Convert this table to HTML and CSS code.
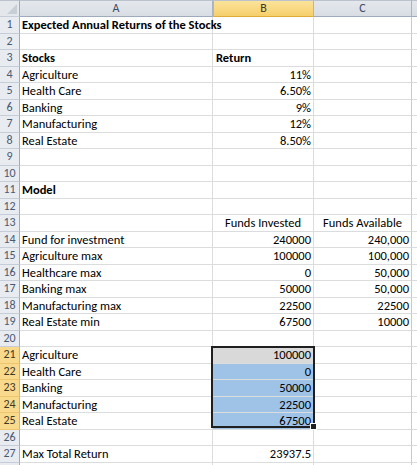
FILE: index.html
```html
<!DOCTYPE html>
<html>
<head>
<meta charset="utf-8">
<link rel="stylesheet" href="styles.css">
</head>
<body>
<div class="sheet">
  <div class="row head">
    <div class="c rh corner"><span class="tri"></span></div>
    <div class="c ch">A</div>
    <div class="c ch sel">B</div>
    <div class="c ch">C</div>
    <div class="c ch end"></div>
  </div>
  <div class="row"><div class="c rh">1</div><div class="c a b">Expected Annual Returns of the Stocks</div><div class="c bb"></div><div class="c cc"></div><div class="c d"></div></div>
  <div class="row"><div class="c rh">2</div><div class="c a"></div><div class="c bb"></div><div class="c cc"></div><div class="c d"></div></div>
  <div class="row"><div class="c rh">3</div><div class="c a b">Stocks</div><div class="c bb b">Return</div><div class="c cc"></div><div class="c d"></div></div>
  <div class="row"><div class="c rh">4</div><div class="c a">Agriculture</div><div class="c bb n">11%</div><div class="c cc"></div><div class="c d"></div></div>
  <div class="row"><div class="c rh">5</div><div class="c a">Health Care</div><div class="c bb n">6.50%</div><div class="c cc"></div><div class="c d"></div></div>
  <div class="row"><div class="c rh">6</div><div class="c a">Banking</div><div class="c bb n">9%</div><div class="c cc"></div><div class="c d"></div></div>
  <div class="row"><div class="c rh">7</div><div class="c a">Manufacturing</div><div class="c bb n">12%</div><div class="c cc"></div><div class="c d"></div></div>
  <div class="row"><div class="c rh">8</div><div class="c a">Real Estate</div><div class="c bb n">8.50%</div><div class="c cc"></div><div class="c d"></div></div>
  <div class="row"><div class="c rh">9</div><div class="c a"></div><div class="c bb"></div><div class="c cc"></div><div class="c d"></div></div>
  <div class="row"><div class="c rh">10</div><div class="c a"></div><div class="c bb"></div><div class="c cc"></div><div class="c d"></div></div>
  <div class="row"><div class="c rh">11</div><div class="c a b">Model</div><div class="c bb"></div><div class="c cc"></div><div class="c d"></div></div>
  <div class="row"><div class="c rh">12</div><div class="c a"></div><div class="c bb"></div><div class="c cc"></div><div class="c d"></div></div>
  <div class="row"><div class="c rh">13</div><div class="c a"></div><div class="c bb ctr">Funds Invested</div><div class="c cc ctr">Funds Available</div><div class="c d"></div></div>
  <div class="row"><div class="c rh">14</div><div class="c a">Fund for investment</div><div class="c bb n">240000</div><div class="c cc n">240,000</div><div class="c d"></div></div>
  <div class="row"><div class="c rh">15</div><div class="c a">Agriculture max</div><div class="c bb n">100000</div><div class="c cc n">100,000</div><div class="c d"></div></div>
  <div class="row"><div class="c rh">16</div><div class="c a">Healthcare max</div><div class="c bb n">0</div><div class="c cc n">50,000</div><div class="c d"></div></div>
  <div class="row"><div class="c rh">17</div><div class="c a">Banking max</div><div class="c bb n">50000</div><div class="c cc n">50,000</div><div class="c d"></div></div>
  <div class="row"><div class="c rh">18</div><div class="c a">Manufacturing max</div><div class="c bb n">22500</div><div class="c cc n">22500</div><div class="c d"></div></div>
  <div class="row"><div class="c rh">19</div><div class="c a">Real Estate min</div><div class="c bb n">67500</div><div class="c cc n">10000</div><div class="c d"></div></div>
  <div class="row"><div class="c rh">20</div><div class="c a"></div><div class="c bb"></div><div class="c cc"></div><div class="c d"></div></div>
  <div class="row"><div class="c rh hl">21</div><div class="c a">Agriculture</div><div class="c bb n active">100000</div><div class="c cc"></div><div class="c d"></div></div>
  <div class="row"><div class="c rh hl">22</div><div class="c a">Health Care</div><div class="c bb n blue">0</div><div class="c cc"></div><div class="c d"></div></div>
  <div class="row"><div class="c rh hl">23</div><div class="c a">Banking</div><div class="c bb n blue">50000</div><div class="c cc"></div><div class="c d"></div></div>
  <div class="row"><div class="c rh hl">24</div><div class="c a">Manufacturing</div><div class="c bb n blue">22500</div><div class="c cc"></div><div class="c d"></div></div>
  <div class="row"><div class="c rh hl">25</div><div class="c a">Real Estate</div><div class="c bb n blue">67500</div><div class="c cc"></div><div class="c d"></div></div>
  <div class="row"><div class="c rh">26</div><div class="c a"></div><div class="c bb"></div><div class="c cc"></div><div class="c d"></div></div>
  <div class="row"><div class="c rh">27</div><div class="c a">Max Total Return</div><div class="c bb n">23937.5</div><div class="c cc"></div><div class="c d"></div></div>
  <div class="row"><div class="c rh"></div><div class="c a"></div><div class="c bb"></div><div class="c cc"></div><div class="c d"></div></div>
  <div class="selection"><span class="handle"></span></div>
</div>
</body>
</html>
```
FILE: styles.css
```css
html, body {
  margin: 0;
  padding: 0;
  background: #ffffff;
}
.sheet {
  position: relative;
  width: 417px;
  height: 465px;
  overflow: hidden;
  font-family: Carlito, "Liberation Sans", Arial, sans-serif;
  font-size: 12.5px;
  color: #000;
}
.row {
  display: grid;
  grid-template-columns: 20px 193px 101px 98px 1fr;
  height: 16.5px;
}
.c {
  box-sizing: border-box;
  border-right: 1px solid #dadcdd;
  border-bottom: 1px solid #dadcdd;
  padding: 0 3px;
  line-height: 15.5px;
  white-space: nowrap;
  overflow: visible;
}
.a { padding-left: 2px; }
.b { font-weight: bold; }
.n { text-align: right; padding-right: 2px; }
.ctr { text-align: center; padding: 0; }
.rh {
  background: #e8ecf1;
  border-right: 1px solid #9eabbd;
  border-bottom: 1px solid #c5cdd8;
  color: #4a5a72;
  text-align: center;
  padding: 0;
  font-size: 12px;
}
.rh.hl {
  background: #f9d98b;
  border-right: 1px solid #e3b44c;
  border-bottom: 1px solid #edc56e;
  color: #3f3a28;
}
.head { height: 17px; }
.ch {
  background: linear-gradient(#e4e8ed, #d8dde4);
  border-top: 1px solid #b9c2cd;
  border-right: 1px solid #a9b4c2;
  border-bottom: 1px solid #9eabbd;
  color: #3c4b5f;
  text-align: center;
  line-height: 14px;
  font-size: 12px;
}
.ch.sel {
  background: linear-gradient(#fbe39b, #f6cf6b);
  border-right: 1px solid #e3b44c;
  border-bottom: 1px solid #e0ad3c;
  border-left: 1px solid #e3b44c;
  color: #3f3a28;
}
.ch.end { border-right: none; }
.corner {
  position: relative;
  background: #e4e8ed;
  border-top: 1px solid #b9c2cd;
}
.tri {
  position: absolute;
  right: 2px;
  bottom: 2px;
  width: 0;
  height: 0;
  border-left: 10px solid transparent;
  border-bottom: 10px solid #c8ced6;
}
.d { border-right: none; }
.cc { border-right: 1px solid #c5cbd3; }
.active { background: #d9d9d9; }
.blue { background: #9fc3e7; }
.selection {
  position: absolute;
  left: 211px;
  top: 346px;
  width: 104px;
  height: 82px;
  box-sizing: border-box;
  border: 2px solid #1f1f1f;
  pointer-events: none;
}
.handle {
  position: absolute;
  right: -4px;
  bottom: -4px;
  width: 5px;
  height: 5px;
  background: #1f1f1f;
  border: 1px solid #fff;
}
```
